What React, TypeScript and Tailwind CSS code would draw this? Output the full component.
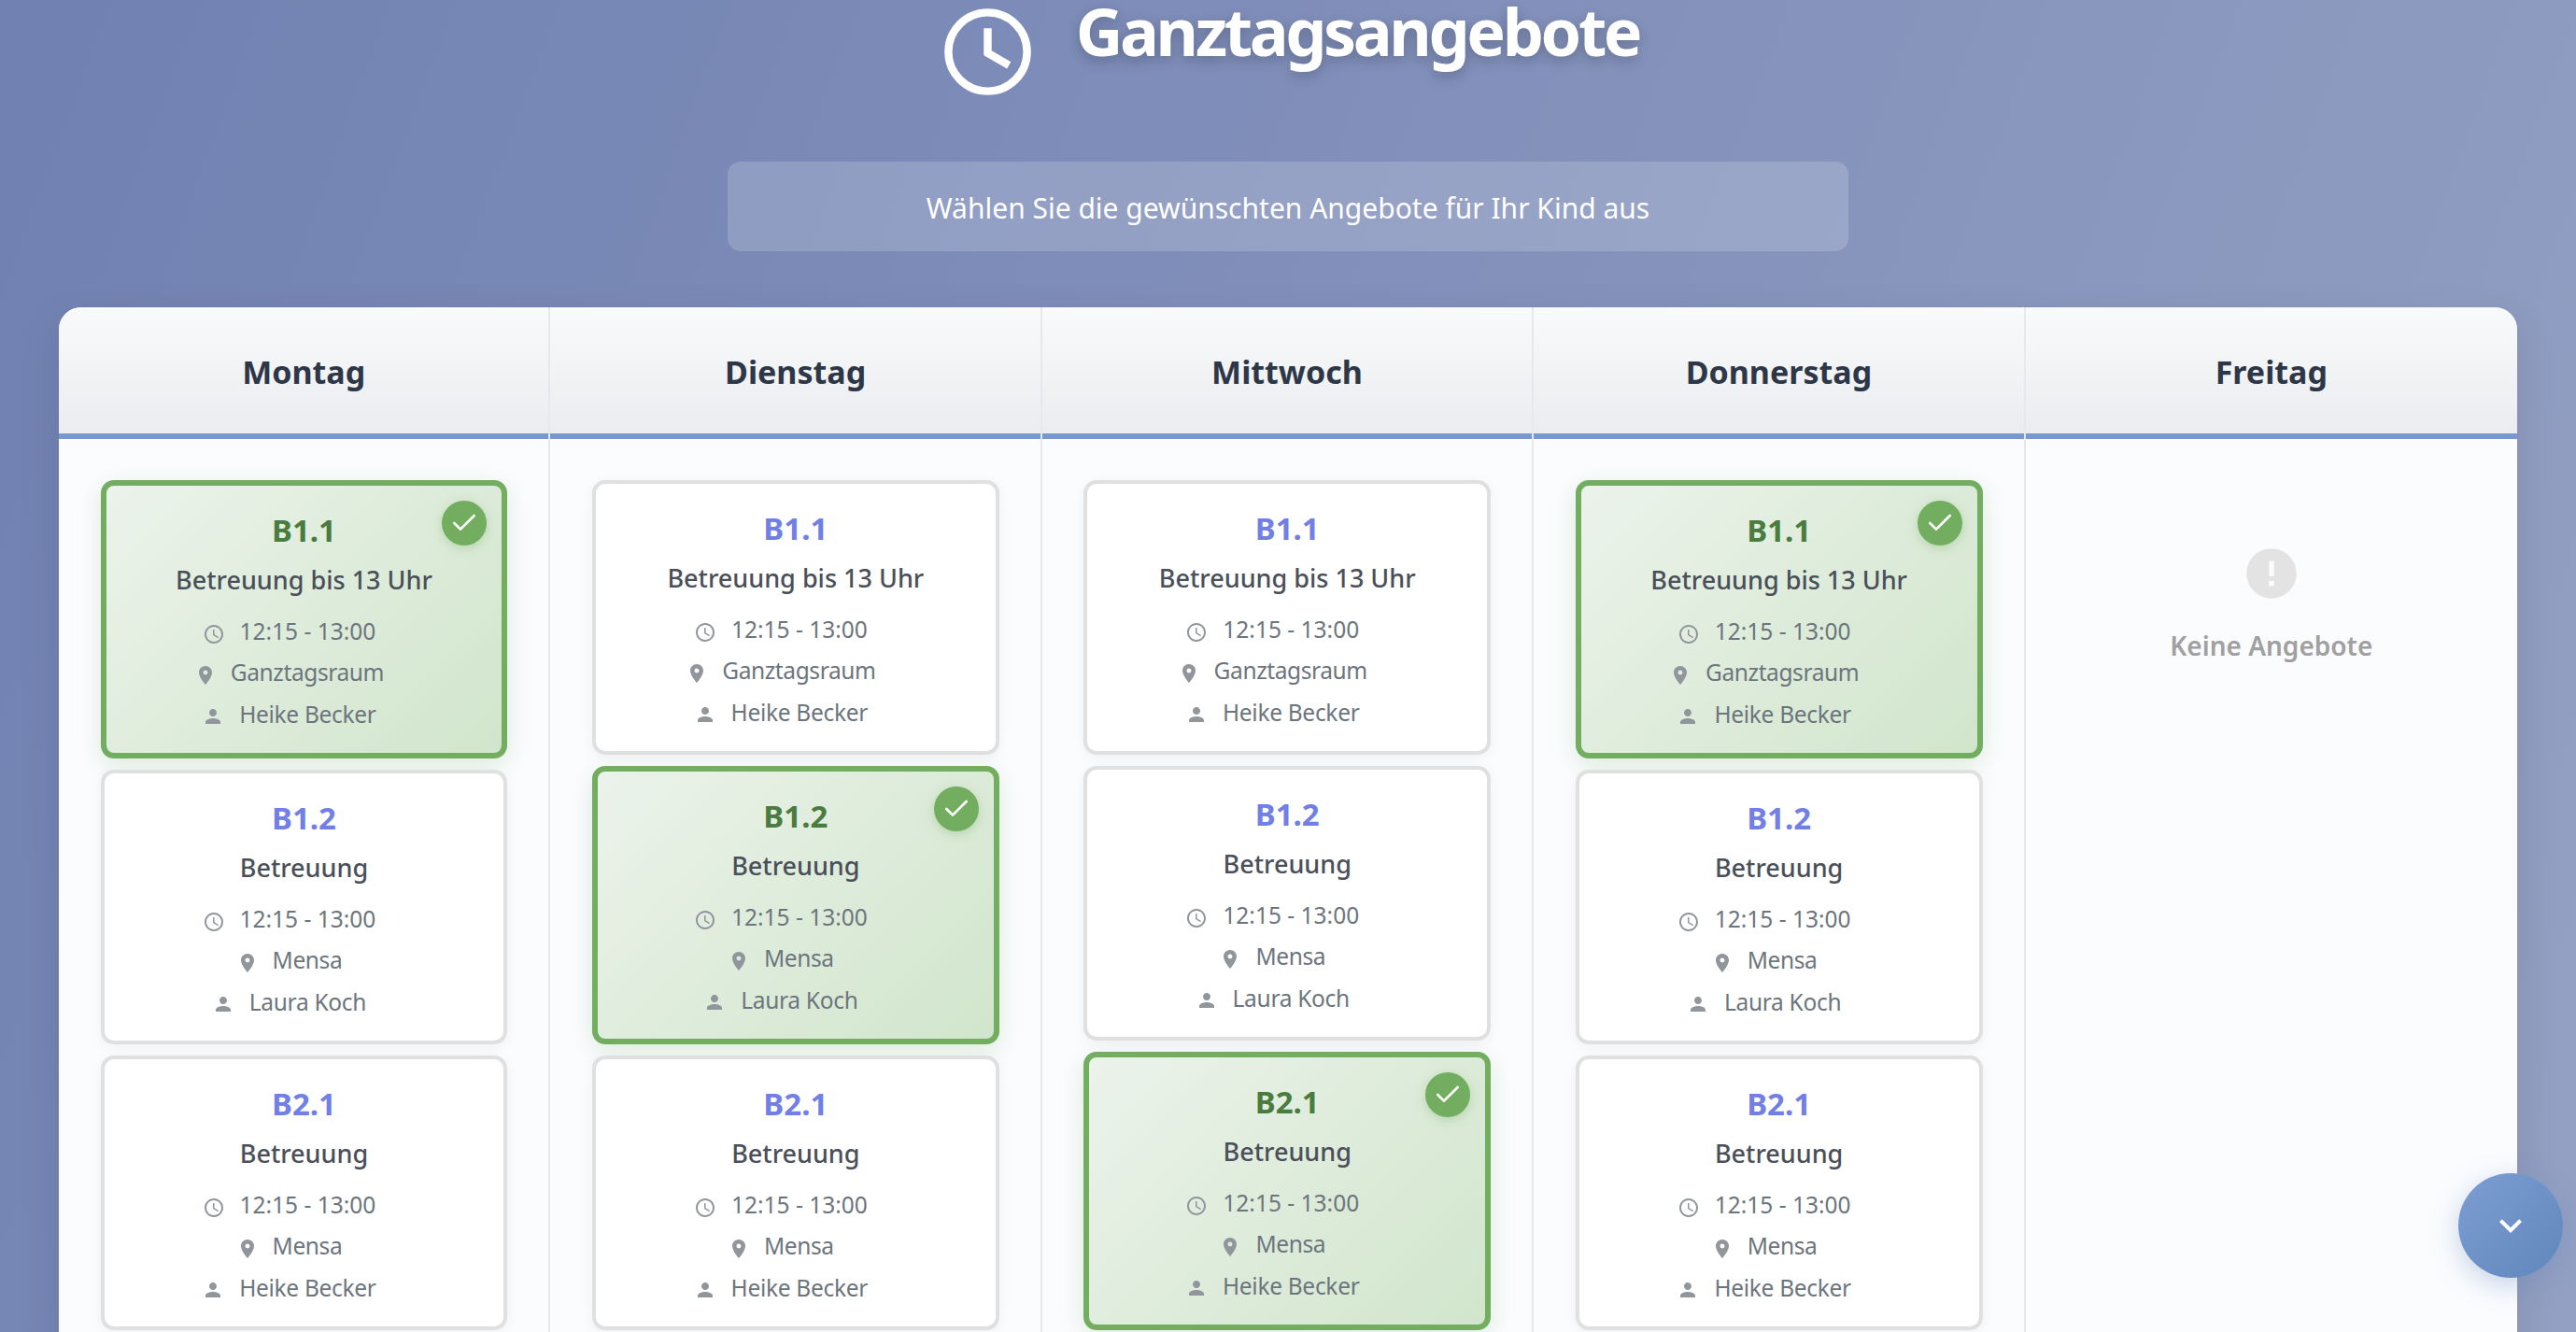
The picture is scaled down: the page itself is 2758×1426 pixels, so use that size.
import { Check } from "lucide-react";
import { MdAccessTime, MdError, MdKeyboardArrowDown, MdLocationOn, MdPerson } from "react-icons/md";

type Offer = { code: string; title: string; room: string; teacher: string };

const offers: Offer[] = [
  { code: "B1.1", title: "Betreuung bis 13 Uhr", room: "Ganztagsraum", teacher: "Heike Becker" },
  { code: "B1.2", title: "Betreuung", room: "Mensa", teacher: "Laura Koch" },
  { code: "B2.1", title: "Betreuung", room: "Mensa", teacher: "Heike Becker" },
];

const days = [
  { name: "Montag", selected: "B1.1", empty: false },
  { name: "Dienstag", selected: "B1.2", empty: false },
  { name: "Mittwoch", selected: "B2.1", empty: false },
  { name: "Donnerstag", selected: "B1.1", empty: false },
  { name: "Freitag", selected: "", empty: true },
];

const OfferCard = ({ offer, selected }: { offer: Offer; selected: boolean }) => {
  return (
    <div
      className={
        selected
          ? "relative rounded-[14px] border-[6px] border-[#72ad60] bg-[linear-gradient(135deg,#ebf3ea,#d1e5cc)] px-4 pt-[25px] pb-[24px] text-center shadow-[0_7px_26px_rgba(114,173,96,0.22)]"
          : "relative rounded-[14px] border-[4px] border-[#e0e0e0] bg-white px-4 pt-[25px] pb-[24px] text-center shadow-[0_3px_14px_rgba(0,0,0,0.05)]"
      }
    >
      {selected && (
        <div className="absolute top-[16px] right-[16px] flex h-[48px] w-[48px] items-center justify-center rounded-full bg-[#72ad60] text-white shadow-[0_3px_12px_rgba(114,173,96,0.35)]">
          <Check size={32} strokeWidth={2} />
        </div>
      )}
      <div className={selected ? "text-[33px] leading-[46px] font-bold text-[#4a7c3f]" : "text-[33px] leading-[46px] font-bold text-[#717fe6]"}>
        {offer.code}
      </div>
      <div className="mt-[10px] text-[27px] leading-[40px] font-medium text-[#4a4f59]">{offer.title}</div>
      <div className="mt-[18px] flex h-[34px] items-center justify-center gap-4 pr-[32px] text-[24.5px] text-[#6c757d]">
        <MdAccessTime size={24} className="mt-[5px] shrink-0 text-[#90969c]" />
        <span>12:15 - 13:00</span>
      </div>
      <div className="mt-[10.5px] flex h-[34px] items-center justify-center gap-[15px] pr-[32px] text-[24.5px] tracking-[-0.4px] text-[#6c757d]">
        <MdLocationOn size={24} className="mt-[4px] shrink-0 text-[#90969c]" />
        <span>{offer.room}</span>
      </div>
      <div className="mt-[10.5px] flex h-[34px] items-center justify-center gap-4 pr-[32px] text-[24.5px] tracking-[-0.3px] text-[#6c757d]">
        <MdPerson size={24} className="mt-[4px] shrink-0 text-[#90969c]" />
        <span>{offer.teacher}</span>
      </div>
    </div>
  );
};

const App = () => {
  return (
    <div className="h-[1426px] overflow-hidden bg-[linear-gradient(110deg,#7081b2,#94a0c3)] font-['Noto_Sans',sans-serif]">
      <div className="flex justify-center gap-[44px] pl-[4px]">
        <svg
          width="101"
          height="101"
          viewBox="0 0 24 24"
          fill="none"
          stroke="currentColor"
          strokeWidth="2"
          className="mt-[5px] shrink-0 text-white"
        >
          <circle cx="12" cy="12" r="10" />
          <path d="M12 6v6.3l5.4 3.1" />
        </svg>
        <h1 className="text-[70px] leading-[66px] font-bold tracking-[-3.4px] text-white [text-shadow:0_5px_14px_rgba(0,0,0,0.22)]">
          Ganztagsangebote
        </h1>
      </div>

      <div className="mx-auto mt-[67px] flex h-[96px] w-[1200px] items-center justify-center rounded-[14px] bg-white/[0.17] pt-[2px] text-[30px] text-white">
        Wählen Sie die gewünschten Angebote für Ihr Kind aus
      </div>

      <div className="mx-[63px] mt-[60px] grid grid-cols-5 overflow-hidden rounded-[24px] bg-[#fbfcfe] shadow-[0_14px_44px_rgba(0,0,0,0.1)]">
        {days.map((day) => (
          <div key={day.name} className="flex h-[1200px] flex-col border-r-2 border-[#e6e8ee] last:border-r-0">
            <div className="flex h-[141px] items-center justify-center border-b-[6px] border-[#7799d1] bg-[linear-gradient(180deg,#f9fafb,#ebecef)] pt-[3px] text-[34px] font-bold text-[#2d3748]">
              {day.name}
            </div>
            {day.empty ? (
              <div className="flex flex-col items-center pt-[112px]">
                <MdError size={64} className="text-[#e3e3e3]" />
                <div className="mt-[23px] text-[28px] leading-[44px] font-semibold text-[#a0a0a0]">Keine Angebote</div>
              </div>
            ) : (
              <div className="flex flex-col gap-3 pt-[44px] pr-[44px] pl-[44.5px]">
                {offers.map((offer) => (
                  <OfferCard key={offer.code} offer={offer} selected={offer.code === day.selected} />
                ))}
              </div>
            )}
          </div>
        ))}
      </div>

      <button className="fixed right-[14px] bottom-[58px] flex h-[112px] w-[112px] items-center justify-center rounded-full bg-[linear-gradient(135deg,#7c9dd3,#6187bb)] text-white shadow-[0_8px_30px_rgba(97,135,187,0.35)]">
        <MdKeyboardArrowDown size={48} />
      </button>
    </div>
  );
};

export default App;
